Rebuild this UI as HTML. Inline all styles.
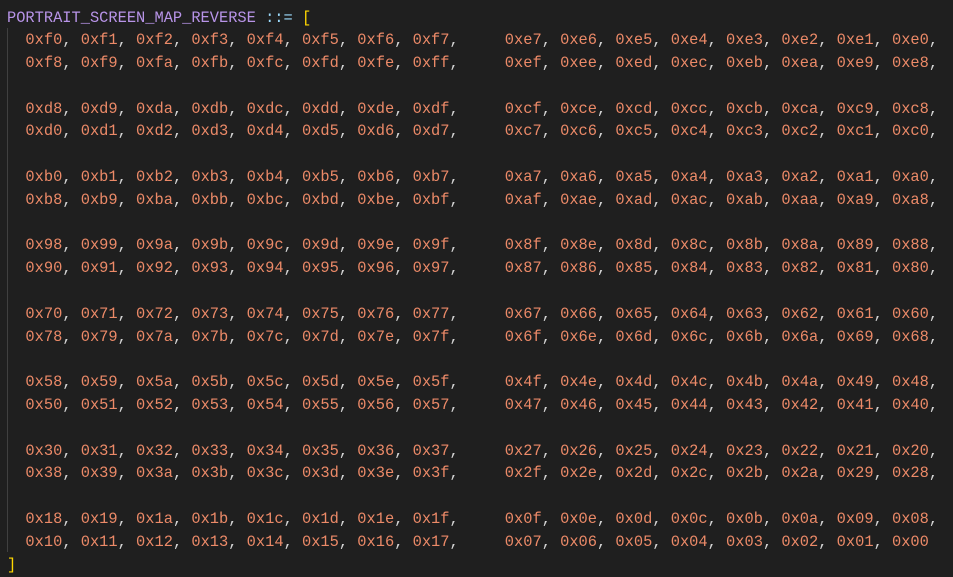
<!DOCTYPE html>
<html><head><style>
html,body{margin:0;padding:0;background:#1f1f1f;width:953px;height:577px;overflow:hidden}
pre{margin:0;position:absolute;left:7px;top:6.5px;font-family:"Liberation Mono",monospace;font-size:15.37px;line-height:22.8px;color:#ec8a68}
.c{color:#d4d4d4}.t{color:#b894e8}.o{color:#9cdcfe}.b{color:#ffd700}
.g{position:absolute;left:7px;top:28px;width:1px;height:524px;background:#404040}
</style></head><body>
<div class="g"></div>
<pre><span class="t">PORTRAIT_SCREEN_MAP_REVERSE</span> <span class="o">::=</span> <span class="b">[</span>
  0xf0<span class="c">,</span> 0xf1<span class="c">,</span> 0xf2<span class="c">,</span> 0xf3<span class="c">,</span> 0xf4<span class="c">,</span> 0xf5<span class="c">,</span> 0xf6<span class="c">,</span> 0xf7<span class="c">,</span>     0xe7<span class="c">,</span> 0xe6<span class="c">,</span> 0xe5<span class="c">,</span> 0xe4<span class="c">,</span> 0xe3<span class="c">,</span> 0xe2<span class="c">,</span> 0xe1<span class="c">,</span> 0xe0<span class="c">,</span>
  0xf8<span class="c">,</span> 0xf9<span class="c">,</span> 0xfa<span class="c">,</span> 0xfb<span class="c">,</span> 0xfc<span class="c">,</span> 0xfd<span class="c">,</span> 0xfe<span class="c">,</span> 0xff<span class="c">,</span>     0xef<span class="c">,</span> 0xee<span class="c">,</span> 0xed<span class="c">,</span> 0xec<span class="c">,</span> 0xeb<span class="c">,</span> 0xea<span class="c">,</span> 0xe9<span class="c">,</span> 0xe8<span class="c">,</span>

  0xd8<span class="c">,</span> 0xd9<span class="c">,</span> 0xda<span class="c">,</span> 0xdb<span class="c">,</span> 0xdc<span class="c">,</span> 0xdd<span class="c">,</span> 0xde<span class="c">,</span> 0xdf<span class="c">,</span>     0xcf<span class="c">,</span> 0xce<span class="c">,</span> 0xcd<span class="c">,</span> 0xcc<span class="c">,</span> 0xcb<span class="c">,</span> 0xca<span class="c">,</span> 0xc9<span class="c">,</span> 0xc8<span class="c">,</span>
  0xd0<span class="c">,</span> 0xd1<span class="c">,</span> 0xd2<span class="c">,</span> 0xd3<span class="c">,</span> 0xd4<span class="c">,</span> 0xd5<span class="c">,</span> 0xd6<span class="c">,</span> 0xd7<span class="c">,</span>     0xc7<span class="c">,</span> 0xc6<span class="c">,</span> 0xc5<span class="c">,</span> 0xc4<span class="c">,</span> 0xc3<span class="c">,</span> 0xc2<span class="c">,</span> 0xc1<span class="c">,</span> 0xc0<span class="c">,</span>

  0xb0<span class="c">,</span> 0xb1<span class="c">,</span> 0xb2<span class="c">,</span> 0xb3<span class="c">,</span> 0xb4<span class="c">,</span> 0xb5<span class="c">,</span> 0xb6<span class="c">,</span> 0xb7<span class="c">,</span>     0xa7<span class="c">,</span> 0xa6<span class="c">,</span> 0xa5<span class="c">,</span> 0xa4<span class="c">,</span> 0xa3<span class="c">,</span> 0xa2<span class="c">,</span> 0xa1<span class="c">,</span> 0xa0<span class="c">,</span>
  0xb8<span class="c">,</span> 0xb9<span class="c">,</span> 0xba<span class="c">,</span> 0xbb<span class="c">,</span> 0xbc<span class="c">,</span> 0xbd<span class="c">,</span> 0xbe<span class="c">,</span> 0xbf<span class="c">,</span>     0xaf<span class="c">,</span> 0xae<span class="c">,</span> 0xad<span class="c">,</span> 0xac<span class="c">,</span> 0xab<span class="c">,</span> 0xaa<span class="c">,</span> 0xa9<span class="c">,</span> 0xa8<span class="c">,</span>

  0x98<span class="c">,</span> 0x99<span class="c">,</span> 0x9a<span class="c">,</span> 0x9b<span class="c">,</span> 0x9c<span class="c">,</span> 0x9d<span class="c">,</span> 0x9e<span class="c">,</span> 0x9f<span class="c">,</span>     0x8f<span class="c">,</span> 0x8e<span class="c">,</span> 0x8d<span class="c">,</span> 0x8c<span class="c">,</span> 0x8b<span class="c">,</span> 0x8a<span class="c">,</span> 0x89<span class="c">,</span> 0x88<span class="c">,</span>
  0x90<span class="c">,</span> 0x91<span class="c">,</span> 0x92<span class="c">,</span> 0x93<span class="c">,</span> 0x94<span class="c">,</span> 0x95<span class="c">,</span> 0x96<span class="c">,</span> 0x97<span class="c">,</span>     0x87<span class="c">,</span> 0x86<span class="c">,</span> 0x85<span class="c">,</span> 0x84<span class="c">,</span> 0x83<span class="c">,</span> 0x82<span class="c">,</span> 0x81<span class="c">,</span> 0x80<span class="c">,</span>

  0x70<span class="c">,</span> 0x71<span class="c">,</span> 0x72<span class="c">,</span> 0x73<span class="c">,</span> 0x74<span class="c">,</span> 0x75<span class="c">,</span> 0x76<span class="c">,</span> 0x77<span class="c">,</span>     0x67<span class="c">,</span> 0x66<span class="c">,</span> 0x65<span class="c">,</span> 0x64<span class="c">,</span> 0x63<span class="c">,</span> 0x62<span class="c">,</span> 0x61<span class="c">,</span> 0x60<span class="c">,</span>
  0x78<span class="c">,</span> 0x79<span class="c">,</span> 0x7a<span class="c">,</span> 0x7b<span class="c">,</span> 0x7c<span class="c">,</span> 0x7d<span class="c">,</span> 0x7e<span class="c">,</span> 0x7f<span class="c">,</span>     0x6f<span class="c">,</span> 0x6e<span class="c">,</span> 0x6d<span class="c">,</span> 0x6c<span class="c">,</span> 0x6b<span class="c">,</span> 0x6a<span class="c">,</span> 0x69<span class="c">,</span> 0x68<span class="c">,</span>

  0x58<span class="c">,</span> 0x59<span class="c">,</span> 0x5a<span class="c">,</span> 0x5b<span class="c">,</span> 0x5c<span class="c">,</span> 0x5d<span class="c">,</span> 0x5e<span class="c">,</span> 0x5f<span class="c">,</span>     0x4f<span class="c">,</span> 0x4e<span class="c">,</span> 0x4d<span class="c">,</span> 0x4c<span class="c">,</span> 0x4b<span class="c">,</span> 0x4a<span class="c">,</span> 0x49<span class="c">,</span> 0x48<span class="c">,</span>
  0x50<span class="c">,</span> 0x51<span class="c">,</span> 0x52<span class="c">,</span> 0x53<span class="c">,</span> 0x54<span class="c">,</span> 0x55<span class="c">,</span> 0x56<span class="c">,</span> 0x57<span class="c">,</span>     0x47<span class="c">,</span> 0x46<span class="c">,</span> 0x45<span class="c">,</span> 0x44<span class="c">,</span> 0x43<span class="c">,</span> 0x42<span class="c">,</span> 0x41<span class="c">,</span> 0x40<span class="c">,</span>

  0x30<span class="c">,</span> 0x31<span class="c">,</span> 0x32<span class="c">,</span> 0x33<span class="c">,</span> 0x34<span class="c">,</span> 0x35<span class="c">,</span> 0x36<span class="c">,</span> 0x37<span class="c">,</span>     0x27<span class="c">,</span> 0x26<span class="c">,</span> 0x25<span class="c">,</span> 0x24<span class="c">,</span> 0x23<span class="c">,</span> 0x22<span class="c">,</span> 0x21<span class="c">,</span> 0x20<span class="c">,</span>
  0x38<span class="c">,</span> 0x39<span class="c">,</span> 0x3a<span class="c">,</span> 0x3b<span class="c">,</span> 0x3c<span class="c">,</span> 0x3d<span class="c">,</span> 0x3e<span class="c">,</span> 0x3f<span class="c">,</span>     0x2f<span class="c">,</span> 0x2e<span class="c">,</span> 0x2d<span class="c">,</span> 0x2c<span class="c">,</span> 0x2b<span class="c">,</span> 0x2a<span class="c">,</span> 0x29<span class="c">,</span> 0x28<span class="c">,</span>

  0x18<span class="c">,</span> 0x19<span class="c">,</span> 0x1a<span class="c">,</span> 0x1b<span class="c">,</span> 0x1c<span class="c">,</span> 0x1d<span class="c">,</span> 0x1e<span class="c">,</span> 0x1f<span class="c">,</span>     0x0f<span class="c">,</span> 0x0e<span class="c">,</span> 0x0d<span class="c">,</span> 0x0c<span class="c">,</span> 0x0b<span class="c">,</span> 0x0a<span class="c">,</span> 0x09<span class="c">,</span> 0x08<span class="c">,</span>
  0x10<span class="c">,</span> 0x11<span class="c">,</span> 0x12<span class="c">,</span> 0x13<span class="c">,</span> 0x14<span class="c">,</span> 0x15<span class="c">,</span> 0x16<span class="c">,</span> 0x17<span class="c">,</span>     0x07<span class="c">,</span> 0x06<span class="c">,</span> 0x05<span class="c">,</span> 0x04<span class="c">,</span> 0x03<span class="c">,</span> 0x02<span class="c">,</span> 0x01<span class="c">,</span> 0x00
<span class="b">]</span></pre>
</body></html>
